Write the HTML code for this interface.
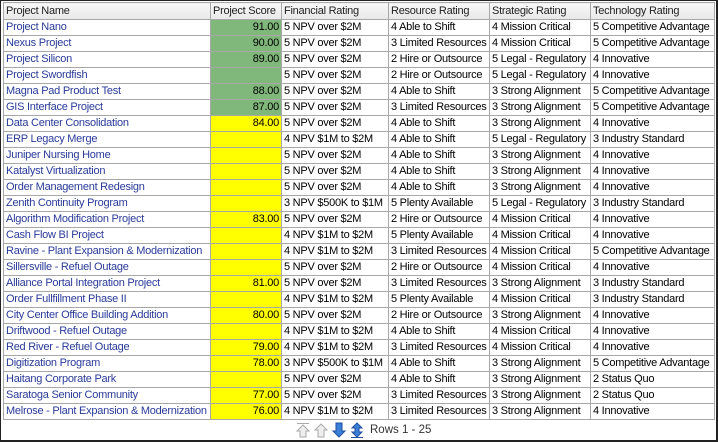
<!DOCTYPE html><html><head><style>
body{margin:0;width:718px;height:442px;background:#fff;overflow:hidden;font-family:"Liberation Sans",sans-serif;}
.frame{position:absolute;left:0;top:0;border:1px solid #222;border-right:2px solid #222;border-bottom:2px solid #222;box-sizing:border-box;width:718px;height:442px;}
table{position:absolute;left:3px;top:2px;width:711px;border-collapse:collapse;table-layout:fixed;font-size:11px;letter-spacing:-0.25px;}
td,th{border:1px solid #a8a8a8;height:15px;padding:0 0 0 2px;white-space:nowrap;overflow:hidden;line-height:15px;}
th{font-weight:normal;text-align:left;background:linear-gradient(#f8f8f8,#e8e8e8);color:#222;height:16px;}
td.n{color:#2a3a9a;}
td.s{text-align:right;padding:0 2px 0 0;}
.g{background:#80b77b;}.y{background:#ffff00;}
.foot{position:absolute;top:422px;left:295px;font-size:11.5px;color:#333;display:flex;align-items:center;gap:2px;}
</style></head><body><div class="frame"></div>
<table>
<colgroup><col style="width:207px"><col style="width:71px"><col style="width:107px"><col style="width:101px"><col style="width:101px"><col style="width:124px"></colgroup>
<tr><th>Project Name</th><th>Project Score</th><th>Financial Rating</th><th>Resource Rating</th><th>Strategic Rating</th><th>Technology Rating</th></tr>
<tr><td class="n">Project Nano</td><td class="s g">91.00</td><td>5 NPV over $2M</td><td>4 Able to Shift</td><td>4 Mission Critical</td><td>5 Competitive Advantage</td></tr>
<tr><td class="n">Nexus Project</td><td class="s g">90.00</td><td>5 NPV over $2M</td><td>3 Limited Resources</td><td>4 Mission Critical</td><td>5 Competitive Advantage</td></tr>
<tr><td class="n">Project Silicon</td><td class="s g">89.00</td><td>5 NPV over $2M</td><td>2 Hire or Outsource</td><td>5 Legal - Regulatory</td><td>4 Innovative</td></tr>
<tr><td class="n">Project Swordfish</td><td class="s g"></td><td>5 NPV over $2M</td><td>2 Hire or Outsource</td><td>5 Legal - Regulatory</td><td>4 Innovative</td></tr>
<tr><td class="n">Magna Pad Product Test</td><td class="s g">88.00</td><td>5 NPV over $2M</td><td>4 Able to Shift</td><td>3 Strong Alignment</td><td>5 Competitive Advantage</td></tr>
<tr><td class="n">GIS Interface Project</td><td class="s g">87.00</td><td>5 NPV over $2M</td><td>3 Limited Resources</td><td>3 Strong Alignment</td><td>5 Competitive Advantage</td></tr>
<tr><td class="n">Data Center Consolidation</td><td class="s y">84.00</td><td>5 NPV over $2M</td><td>4 Able to Shift</td><td>3 Strong Alignment</td><td>4 Innovative</td></tr>
<tr><td class="n">ERP Legacy Merge</td><td class="s y"></td><td>4 NPV $1M to $2M</td><td>4 Able to Shift</td><td>5 Legal - Regulatory</td><td>3 Industry Standard</td></tr>
<tr><td class="n">Juniper Nursing Home</td><td class="s y"></td><td>5 NPV over $2M</td><td>4 Able to Shift</td><td>3 Strong Alignment</td><td>4 Innovative</td></tr>
<tr><td class="n">Katalyst Virtualization</td><td class="s y"></td><td>5 NPV over $2M</td><td>4 Able to Shift</td><td>3 Strong Alignment</td><td>4 Innovative</td></tr>
<tr><td class="n">Order Management Redesign</td><td class="s y"></td><td>5 NPV over $2M</td><td>4 Able to Shift</td><td>3 Strong Alignment</td><td>4 Innovative</td></tr>
<tr><td class="n">Zenith Continuity Program</td><td class="s y"></td><td>3 NPV $500K to $1M</td><td>5 Plenty Available</td><td>5 Legal - Regulatory</td><td>3 Industry Standard</td></tr>
<tr><td class="n">Algorithm Modification Project</td><td class="s y">83.00</td><td>5 NPV over $2M</td><td>2 Hire or Outsource</td><td>4 Mission Critical</td><td>4 Innovative</td></tr>
<tr><td class="n">Cash Flow BI Project</td><td class="s y"></td><td>4 NPV $1M to $2M</td><td>5 Plenty Available</td><td>4 Mission Critical</td><td>4 Innovative</td></tr>
<tr><td class="n">Ravine - Plant Expansion &amp; Modernization</td><td class="s y"></td><td>4 NPV $1M to $2M</td><td>3 Limited Resources</td><td>4 Mission Critical</td><td>5 Competitive Advantage</td></tr>
<tr><td class="n">Sillersville - Refuel Outage</td><td class="s y"></td><td>5 NPV over $2M</td><td>2 Hire or Outsource</td><td>4 Mission Critical</td><td>4 Innovative</td></tr>
<tr><td class="n">Alliance Portal Integration Project</td><td class="s y">81.00</td><td>5 NPV over $2M</td><td>3 Limited Resources</td><td>3 Strong Alignment</td><td>3 Industry Standard</td></tr>
<tr><td class="n">Order Fullfillment Phase II</td><td class="s y"></td><td>4 NPV $1M to $2M</td><td>5 Plenty Available</td><td>4 Mission Critical</td><td>3 Industry Standard</td></tr>
<tr><td class="n">City Center Office Building Addition</td><td class="s y">80.00</td><td>5 NPV over $2M</td><td>2 Hire or Outsource</td><td>3 Strong Alignment</td><td>4 Innovative</td></tr>
<tr><td class="n">Driftwood - Refuel Outage</td><td class="s y"></td><td>4 NPV $1M to $2M</td><td>4 Able to Shift</td><td>4 Mission Critical</td><td>4 Innovative</td></tr>
<tr><td class="n">Red River - Refuel Outage</td><td class="s y">79.00</td><td>4 NPV $1M to $2M</td><td>3 Limited Resources</td><td>4 Mission Critical</td><td>4 Innovative</td></tr>
<tr><td class="n">Digitization Program</td><td class="s y">78.00</td><td>3 NPV $500K to $1M</td><td>4 Able to Shift</td><td>3 Strong Alignment</td><td>5 Competitive Advantage</td></tr>
<tr><td class="n">Haitang Corporate Park</td><td class="s y"></td><td>5 NPV over $2M</td><td>4 Able to Shift</td><td>3 Strong Alignment</td><td>2 Status Quo</td></tr>
<tr><td class="n">Saratoga Senior Community</td><td class="s y">77.00</td><td>5 NPV over $2M</td><td>3 Limited Resources</td><td>3 Strong Alignment</td><td>2 Status Quo</td></tr>
<tr><td class="n">Melrose - Plant Expansion &amp; Modernization</td><td class="s y">76.00</td><td>4 NPV $1M to $2M</td><td>3 Limited Resources</td><td>3 Strong Alignment</td><td>4 Innovative</td></tr>
</table>
<div class="foot">
<svg width="16" height="16" viewBox="0 0 16 16"><line x1="2" y1="1.5" x2="14" y2="1.5" stroke="#aaa"/><path d="M8 3L14 9H11V15H5V9H2Z" fill="#eee" stroke="#aaa"/></svg>
<svg width="16" height="16" viewBox="0 0 16 16"><path d="M8 2L14 8H11V15H5V8H2Z" fill="#eee" stroke="#aaa"/></svg>
<svg width="16" height="16" viewBox="0 0 16 16"><path d="M8 15L14 9H11V1H5V9H2Z" fill="#3a7fd8" stroke="#1f4fa0"/></svg>
<svg width="16" height="16" viewBox="0 0 16 16"><path d="M8 1L13 6H10V10H13L8 15L3 10H6V6H3Z" fill="#3a7fd8" stroke="#1f4fa0"/><line x1="2" y1="15.5" x2="14" y2="15.5" stroke="#1f4fa0"/></svg>
<span style="margin-left:3px">Rows 1 - 25</span>
</div>
</body></html>
